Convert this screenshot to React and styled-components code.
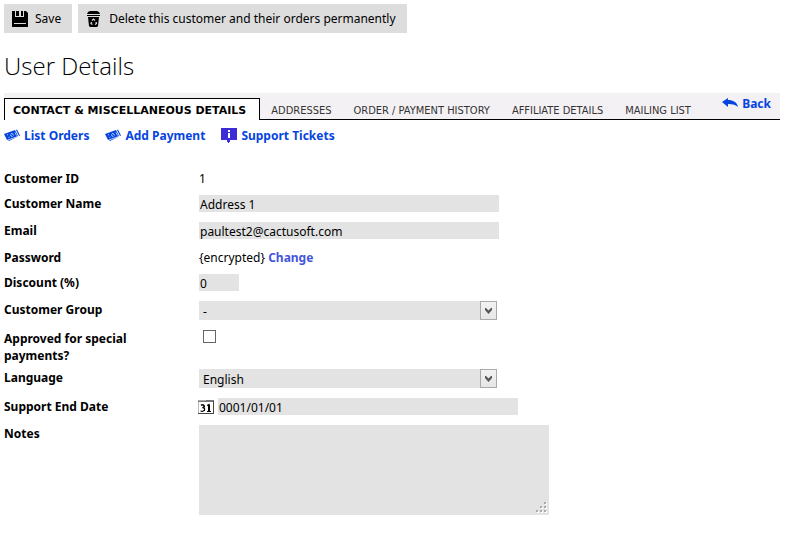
import React from 'react';
import styled, { createGlobalStyle } from 'styled-components';

const colors = {
  text: '#000',
  button: '#ddd',
  field: '#e3e3e3',
  tabBar: '#f3f1f4',
  tabText: '#333',
  link: '#0645e0',
  change: '#4455dd',
  info: '#3d2bd8',
};

const sansFont = "'Noto Sans', 'Open Sans', sans-serif";

const tabs = ['Addresses', 'Order / Payment History', 'Affiliate Details', 'Mailing List'];

function SaveIcon() {
  return (
    <svg width="16" height="16" viewBox="0 0 16 16" aria-hidden="true">
      <path d="M0 0h3v6h9V0h2l2 2v14H0zM4 0h3v5H4zM9 0h2v5H9z" />
      <path d="M2 12h12v1H2z" fill={colors.button} />
    </svg>
  );
}

function TrashIcon() {
  return (
    <svg width="16" height="16" viewBox="0 0 16 16" aria-hidden="true">
      <path d="M4 0h7l2 1 1 2H1l1-2zM1 4h13v1H1zM2 6h11l-1 9-1 1H4l-1-1z" />
      <path
        d="M6 9.500 7.500 8 9 9.500M10 11l.500 1.500L9 13.500M6.500 13.500 5 12.500 5.500 11"
        fill="none"
        stroke={colors.button}
        strokeWidth="1.200"
      />
    </svg>
  );
}

function MoneyIcon() {
  return (
    <svg width="16" height="14" viewBox="0 0 16 14" aria-hidden="true">
      <path d="M0 5 11 1l3 6L3 11z" fill={colors.link} />
      <path d="m12 1 1-.500 3 6L5 12l-1-.500L15 7z" fill={colors.link} />
      <path
        d="m3 6 1-.500M4.500 8.500l1-.500M7 4.500q2-.500 2.500 2M6.500 5.500q0 2 2 2M11 3.500l1.500 3"
        stroke="#fff"
        strokeWidth="0.700"
        fill="none"
      />
    </svg>
  );
}

function InfoIcon() {
  return (
    <svg width="16" height="16" viewBox="0 0 16 16" aria-hidden="true">
      <path d="M0 0h16v12H9v2H8v1H7v-1H6v-2H0z" fill={colors.info} />
      <path d="M7 2h2v2H7zM7 5h2v5H7z" fill="#fff" />
    </svg>
  );
}

function BackIcon() {
  return (
    <svg width="16" height="12" viewBox="0 0 16 12" aria-hidden="true">
      <path d="M0 4 6 0v2c5 0 9 2 10 7-2-2-5-3-10-3v3z" fill={colors.link} />
    </svg>
  );
}

function CalendarIcon() {
  return (
    <svg width="16" height="16" viewBox="0 0 16 16" aria-hidden="true">
      <path d="M0 1h15v14H0z" fill="#fff" />
      <path d="M0 1h16v2H0z" fill="#777" />
      <path d="M0 1h8v1H0z" fill="#aaa" />
      <path d="M0.500 3v12" stroke="#bbb" />
      <path d="M0 15h16V2h-1v12H0z" fill="#444" />
      <path
        d="M3 6.500Q4.500 5 6 6.500 6.500 8 4.500 8.700 7 9 6.500 11 5 13 2.500 12M9 6.500l2-1V12M9 12.500h4"
        fill="none"
        stroke="#000"
        strokeWidth="1.200"
      />
      <path d="M10 6h2v6h-2zM6 6.500h1v2H6zM6 9h1v3H6z" />
    </svg>
  );
}

function SelectField({ id, children }) {
  return (
    <SelectWrap>
      <Select id={id}>{children}</Select>
      <SelectArrow>
        <svg width="7" height="6" viewBox="0 0 7 6" aria-hidden="true">
          <path d="M0 0h1l2.500 2.500L6 0h1v2L3.500 6 0 2z" fill="#555" />
        </svg>
      </SelectArrow>
    </SelectWrap>
  );
}

function App() {
  return (
    <>
      <GlobalStyle />
      <Page>
        <Toolbar>
          <ToolbarButton type="button">
            <SaveIcon />
            Save
          </ToolbarButton>
          <ToolbarButton type="button">
            <TrashIcon />
            Delete this customer and their orders permanently
          </ToolbarButton>
        </Toolbar>

        <Title>User Details</Title>

        <TabBar>
          <ActiveTab href="#contact">Contact &amp; Miscellaneous Details</ActiveTab>
          {tabs.map((tab) => (
            <Tab key={tab} href="#tab">
              {tab}
            </Tab>
          ))}
          <BackLink href="#back">
            <BackIcon />
            Back
          </BackLink>
        </TabBar>

        <Actions>
          <ActionLink href="#orders">
            <MoneyIcon />
            List Orders
          </ActionLink>
          <ActionLink href="#payment">
            <MoneyIcon />
            Add Payment
          </ActionLink>
          <ActionLink href="#tickets">
            <InfoIcon />
            Support Tickets
          </ActionLink>
        </Actions>

        <Form>
          <Row $gap={8}>
            <Label as="span">Customer ID</Label>
            <span>1</span>
          </Row>
          <Row>
            <Label htmlFor="name">Customer Name</Label>
            <Input id="name" defaultValue="Address 1" />
          </Row>
          <Row>
            <Label htmlFor="email">Email</Label>
            <Input id="email" defaultValue="paultest2@cactusoft.com" />
          </Row>
          <Row $gap={8}>
            <Label as="span">Password</Label>
            <span>
              {'{encrypted} '}
              <ChangeLink href="#change">Change</ChangeLink>
            </span>
          </Row>
          <Row>
            <Label htmlFor="discount">Discount (%)</Label>
            <Input id="discount" defaultValue="0" $width={40} />
          </Row>
          <Row>
            <Label htmlFor="group">Customer Group</Label>
            <SelectField id="group">
              <option>-</option>
            </SelectField>
          </Row>
          <Row $gap={5}>
            <Label htmlFor="approved">Approved for special payments?</Label>
            <Checkbox id="approved" type="checkbox" />
          </Row>
          <Row>
            <Label htmlFor="language">Language</Label>
            <SelectField id="language">
              <option>English</option>
            </SelectField>
          </Row>
          <Row>
            <Label htmlFor="endDate">Support End Date</Label>
            <DateField>
              <CalendarIcon />
              <Input id="endDate" defaultValue="0001/01/01" />
            </DateField>
          </Row>
          <Row>
            <Label htmlFor="notes">Notes</Label>
            <NotesWrap>
              <Notes id="notes" />
              <Grip width="11" height="11" viewBox="0 0 11 11" aria-hidden="true">
                <path
                  d="M9 1h2v2H9zM5 5h2v2H5zM9 5h2v2H9zM1 9h2v2H1zM5 9h2v2H5zM9 9h2v2H9z"
                  fill="#fff"
                />
                <path
                  d="M8 0h2v2H8zM4 4h2v2H4zM8 4h2v2H8zM0 8h2v2H0zM4 8h2v2H4zM8 8h2v2H8z"
                  fill="#aaa"
                />
              </Grip>
            </NotesWrap>
          </Row>
        </Form>
      </Page>
    </>
  );
}

const GlobalStyle = createGlobalStyle`
  * {
    box-sizing: border-box;
  }

  body {
    margin: 0;
    background: #fff;
    color: ${colors.text};
    font-family: ${sansFont};
    font-size: 12px;
    line-height: 17px;
  }

  button,
  input,
  select,
  textarea {
    margin: 0;
    font: inherit;
    color: inherit;
  }

  svg {
    flex: none;
  }
`;

const Page = styled.main`
  padding: 4px 6px 24px 4px;
`;

const Toolbar = styled.div`
  display: flex;
  gap: 6px;
`;

const ToolbarButton = styled.button`
  display: flex;
  align-items: center;
  gap: 7px;
  height: 29px;
  padding: 0 11px 0 8px;
  border: 0;
  background: ${colors.button};
`;

const Title = styled.h1`
  margin: 16px 0 10px;
  font-family: 'Open Sans', sans-serif;
  font-size: 24px;
  font-weight: 300;
  line-height: 34px;
`;

const TabBar = styled.nav`
  display: flex;
  align-items: flex-end;
  height: 27px;
  border-bottom: 1px solid #000;
  background: ${colors.tabBar};
`;

const Tab = styled.a`
  padding: 0 11px;
  color: ${colors.tabText};
  font-family: 'DejaVu Sans Condensed', 'DejaVu Sans', sans-serif;
  font-size: 11px;
  line-height: 17px;
  text-decoration: none;
  text-transform: uppercase;
  white-space: nowrap;
`;

const ActiveTab = styled(Tab)`
  margin-bottom: -1px;
  padding: 3px 13px 1px 8px;
  border: 1px solid #000;
  border-bottom: 0;
  background: #fff;
  color: ${colors.text};
  font-family: 'DejaVu Sans', sans-serif;
  font-weight: 700;
`;

const BackLink = styled.a`
  display: flex;
  align-self: flex-start;
  align-items: center;
  gap: 4px;
  margin-left: auto;
  padding: 2px 9px 0 0;
  color: ${colors.link};
  font-weight: 700;
  text-decoration: none;
`;

const Actions = styled.div`
  display: flex;
  gap: 16px;
  margin-top: 7px;
`;

const ActionLink = styled.a`
  display: flex;
  align-items: center;
  gap: 4px;
  color: ${colors.link};
  font-weight: 700;
  text-decoration: none;
`;

const Form = styled.form`
  margin-top: 26px;
`;

const Row = styled.div`
  display: grid;
  grid-template-columns: 180px 1fr;
  column-gap: 15px;
  align-items: start;
  padding-bottom: ${(p) => p.$gap ?? 10}px;
`;

const Label = styled.label`
  max-width: 150px;
  font-weight: 700;
`;

const Input = styled.input`
  width: ${(p) => p.$width ?? 300}px;
  height: 17px;
  padding: 1px 1px 0;
  border: 0;
  border-radius: 0;
  background: ${colors.field};
`;

const ChangeLink = styled.a`
  color: ${colors.change};
  font-weight: 700;
  text-decoration: none;
`;

const SelectWrap = styled.div`
  position: relative;
  width: 298px;
  height: 19px;
`;

const Select = styled.select`
  display: block;
  width: 100%;
  height: 100%;
  padding: 1px 20px 0 4px;
  border: 0;
  border-radius: 0;
  background: ${colors.field};
  appearance: none;
`;

const SelectArrow = styled.span`
  position: absolute;
  top: 0;
  right: 0;
  display: flex;
  align-items: center;
  justify-content: center;
  width: 17px;
  height: 19px;
  border: 1px solid #aaa;
  background: linear-gradient(#f2f2f2, #e6e6e6);
  pointer-events: none;
`;

const Checkbox = styled.input`
  width: 13px;
  height: 13px;
  margin-left: 4px;
  border: 1px solid #666;
  background: #fff;
  appearance: none;

  &:checked {
    background: #666;
  }
`;

const DateField = styled.div`
  display: flex;
  align-items: center;
  gap: 4px;
  margin-left: -1px;
`;

const NotesWrap = styled.div`
  position: relative;
  justify-self: start;
`;

const Notes = styled.textarea`
  display: block;
  width: 350px;
  height: 90px;
  padding: 2px;
  border: 0;
  background: ${colors.field};

  &::-webkit-resizer {
    background: transparent;
  }
`;

const Grip = styled.svg`
  position: absolute;
  right: 2px;
  bottom: 2px;
  pointer-events: none;
`;

export default App;
